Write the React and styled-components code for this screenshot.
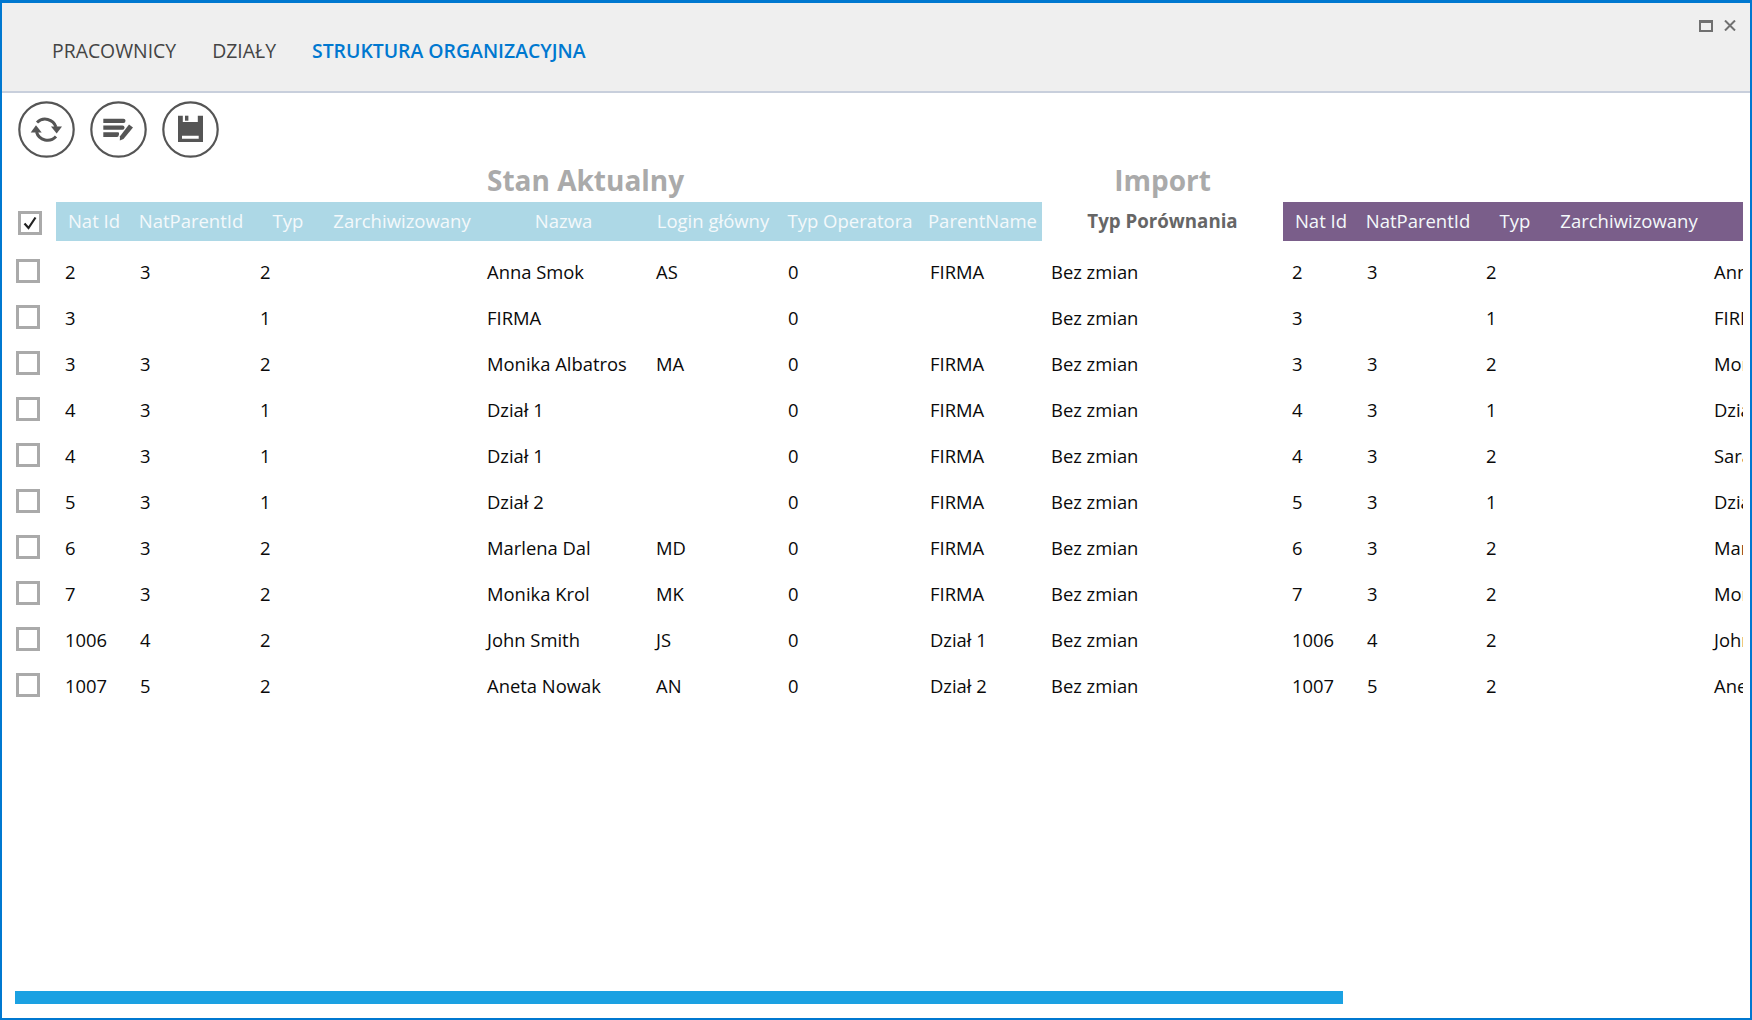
import React from 'react'
import styled, { createGlobalStyle } from 'styled-components'

const COLUMNS = '40px 76px 118px 76px 152px 171px 128px 146px 119px 241px 76px 118px 76px 152px 38px'
const FONT = '"Open Sans", "Liberation Sans", sans-serif'

const GlobalStyle = createGlobalStyle`
    html, body {
        margin: 0;
        padding: 0;
        background: #fff;
        overflow: hidden;
    }
`

const leftHeaders = ['Nat Id', 'NatParentId', 'Typ', 'Zarchiwizowany', 'Nazwa', 'Login główny', 'Typ Operatora', 'ParentName']
const rightHeaders = ['Nat Id', 'NatParentId', 'Typ', 'Zarchiwizowany', '']

// left padding of the text, one per data column
const pads = [9, 8, 10, 9, 9, 7, 11, 7, 9, 9, 8, 9, 9, 9]

const rows = [
    ['2', '3', '2', '', 'Anna Smok', 'AS', '0', 'FIRMA', 'Bez zmian', '2', '3', '2', '', 'Anna Smok'],
    ['3', '', '1', '', 'FIRMA', '', '0', '', 'Bez zmian', '3', '', '1', '', 'FIRMA'],
    ['3', '3', '2', '', 'Monika Albatros', 'MA', '0', 'FIRMA', 'Bez zmian', '3', '3', '2', '', 'Monika Albatros'],
    ['4', '3', '1', '', 'Dział 1', '', '0', 'FIRMA', 'Bez zmian', '4', '3', '1', '', 'Dział 1'],
    ['4', '3', '1', '', 'Dział 1', '', '0', 'FIRMA', 'Bez zmian', '4', '3', '2', '', 'Sara Nowak'],
    ['5', '3', '1', '', 'Dział 2', '', '0', 'FIRMA', 'Bez zmian', '5', '3', '1', '', 'Dział 2'],
    ['6', '3', '2', '', 'Marlena Dal', 'MD', '0', 'FIRMA', 'Bez zmian', '6', '3', '2', '', 'Marlena Dal'],
    ['7', '3', '2', '', 'Monika Krol', 'MK', '0', 'FIRMA', 'Bez zmian', '7', '3', '2', '', 'Monika Krol'],
    ['1006', '4', '2', '', 'John Smith', 'JS', '0', 'Dział 1', 'Bez zmian', '1006', '4', '2', '', 'John Smith'],
    ['1007', '5', '2', '', 'Aneta Nowak', 'AN', '0', 'Dział 2', 'Bez zmian', '1007', '5', '2', '', 'Aneta Nowak'],
]

function RefreshIcon() {
    return (
        <IconSvg viewBox="0 0 57 57">
            <circle cx="28.5" cy="28.5" r="27.2" fill="none" stroke="#555" strokeWidth="2.2" />
            <path d="M19 21.5 A11.5 11.5 0 0 1 38 26" fill="none" stroke="#555" strokeWidth="3" />
            <path d="M38.7 32.5 L33 25.5 L44 25.5 Z" fill="#555" />
            <path d="M38 35.5 A11.5 11.5 0 0 1 18.5 31" fill="none" stroke="#555" strokeWidth="3" />
            <path d="M18 24.3 L12.7 31.5 L23.7 31.5 Z" fill="#555" />
        </IconSvg>
    )
}

function EditListIcon() {
    return (
        <IconSvg viewBox="0 0 57 57">
            <circle cx="28.5" cy="28.5" r="27.2" fill="none" stroke="#555" strokeWidth="2.2" />
            <path d="M13.3 17.7 H33.5 Q35.5 17.7 35.5 19.8 Q35.5 22 33.5 22 H13.3 Z" fill="#555" />
            <path d="M13.3 24.4 H32.5 Q34.5 24.4 34.5 26.5 Q34.5 28.7 32.5 28.7 H13.3 Z" fill="#555" />
            <path d="M13.3 31.3 H28 Q29.5 31.3 29 33.5 Q28.5 36 27 36 H13.3 Z" fill="#555" />
            <path d="M39 23.5 L43 26.5 L33.5 38 L29.8 39.5 L30 35.3 Z" fill="#555" />
        </IconSvg>
    )
}

function SaveIcon() {
    return (
        <IconSvg viewBox="0 0 57 57">
            <circle cx="28.5" cy="28.5" r="27.2" fill="none" stroke="#555" strokeWidth="2.2" />
            <path
                fillRule="evenodd"
                d="M16 14.7 H20.8 V21 H35.8 V14.7 H41 V41 H16 Z M20 34.7 V37.8 H36.7 V34.7 Z"
                fill="#555"
            />
            <rect x="23" y="14.7" width="3.4" height="5" fill="#555" />
        </IconSvg>
    )
}

function CheckBox({ checked }) {
    return (
        <Box $checked={checked}>
            {checked && (
                <svg width="18" height="18" viewBox="0 0 18 18">
                    <path d="M3.5 9.5 L7.5 14 L14.5 3.5" fill="none" stroke="#222" strokeWidth="2.2" />
                </svg>
            )}
        </Box>
    )
}

function App() {
    return (
        <Window>
            <GlobalStyle />
            <TabBar>
                <Tabs>
                    <Tab>PRACOWNICY</Tab>
                    <Tab>DZIAŁY</Tab>
                    <Tab $active>STRUKTURA ORGANIZACYJNA</Tab>
                </Tabs>
                <WindowControls>
                    <MaximizeGlyph />
                    <svg width="12" height="11" viewBox="0 0 12 11">
                        <path d="M1 0.5 L11 10.5 M11 0.5 L1 10.5" stroke="#707070" strokeWidth="2" />
                    </svg>
                </WindowControls>
            </TabBar>

            <Toolbar>
                <RoundButton><RefreshIcon /></RoundButton>
                <RoundButton><EditListIcon /></RoundButton>
                <RoundButton><SaveIcon /></RoundButton>
            </Toolbar>

            <Table>
                <TitleRow>
                    <CurrentTitle>Stan Aktualny</CurrentTitle>
                    <ImportTitle>Import</ImportTitle>
                </TitleRow>
                <HeaderRow>
                    <SelectAll><CheckBox checked /></SelectAll>
                    {leftHeaders.map((h) => <HeaderCell key={h} $tone="#add8e6">{h}</HeaderCell>)}
                    <CompareHeader>Typ Porównania</CompareHeader>
                    {rightHeaders.map((h, i) => <HeaderCell key={i} $tone="#7a5e8a">{h}</HeaderCell>)}
                </HeaderRow>
                <Rows>
                    {rows.map((row, r) => (
                        <Row key={r}>
                            <CheckBox />
                            {row.map((value, c) => <Cell key={c} $pad={pads[c]}>{value}</Cell>)}
                        </Row>
                    ))}
                </Rows>
            </Table>

            <ScrollThumb />
        </Window>
    )
}

const Window = styled.div`
    box-sizing: border-box;
    width: 1752px;
    height: 1020px;
    display: flex;
    flex-direction: column;
    border: 2px solid #0078d0;
    border-top-width: 3px;
    background: #fff;
    font-family: ${FONT};
    overflow: hidden;
`

const TabBar = styled.div`
    box-sizing: border-box;
    height: 90px;
    display: flex;
    justify-content: space-between;
    background: #efefef;
    border-bottom: 2px solid #c8cfdc;
`

const Tabs = styled.div`
    display: flex;
    align-items: center;
    gap: 36px;
    padding: 6px 0 0 50px;
`

const Tab = styled.div`
    font-size: 19.4px;
    font-weight: ${(p) => (p.$active ? 600 : 400)};
    color: ${(p) => (p.$active ? '#0078d0' : '#444')};
`

const WindowControls = styled.div`
    display: flex;
    align-items: flex-start;
    gap: 11px;
    padding: 17px 14px 0 0;
`

const MaximizeGlyph = styled.div`
    box-sizing: border-box;
    width: 14px;
    height: 12px;
    border: 2px solid #707070;
    border-top-width: 3px;
`

const Toolbar = styled.div`
    display: flex;
    gap: 15px;
    padding: 8px 0 0 16px;
`

const RoundButton = styled.div`
    width: 57px;
    height: 57px;
`

const IconSvg = styled.svg`
    display: block;
    width: 57px;
    height: 57px;
`

const Table = styled.div`
    flex: 1;
    display: flex;
    flex-direction: column;
    padding-left: 14px;
`

const TitleRow = styled.div`
    height: 44px;
    display: grid;
    grid-template-columns: ${COLUMNS};
    align-items: end;
`

const CurrentTitle = styled.div`
    grid-column: 6 / 10;
    padding: 0 0 2px 9px;
    font-size: 28px;
    font-weight: 700;
    line-height: 40px;
    color: #aaa;
`

const ImportTitle = styled.div`
    grid-column: 10;
    padding-bottom: 2px;
    text-align: center;
    font-size: 28px;
    font-weight: 700;
    line-height: 40px;
    color: #aaa;
`

const HeaderRow = styled.div`
    height: 39px;
    display: grid;
    grid-template-columns: ${COLUMNS};
`

const SelectAll = styled.div`
    display: flex;
    align-items: center;
    padding: 3px 0 0 2px;
`

const HeaderCell = styled.div`
    display: flex;
    align-items: center;
    justify-content: center;
    padding-bottom: 2px;
    font-size: 18.5px;
    color: #f4f9fb;
    white-space: nowrap;
    background: ${(p) => p.$tone};
`

const CompareHeader = styled.div`
    display: flex;
    align-items: center;
    justify-content: center;
    padding-bottom: 2px;
    font-size: 18.7px;
    font-weight: 700;
    color: #666;
`

const Rows = styled.div`
    padding-top: 7px;
`

const Row = styled.div`
    height: 46px;
    display: grid;
    grid-template-columns: ${COLUMNS};
    align-items: center;
`

const Cell = styled.div`
    padding: 1px 0 0 ${(p) => p.$pad}px;
    font-size: 18.4px;
    color: #0a0a0a;
    white-space: nowrap;
    overflow: hidden;
`

const Box = styled.div`
    box-sizing: border-box;
    width: 24px;
    height: 24px;
    display: flex;
    align-items: center;
    justify-content: center;
    border: 3px solid #aaa;
    background: #fff;
`

const ScrollThumb = styled.div`
    flex: none;
    width: 1328px;
    height: 13px;
    margin: 0 0 14px 13px;
    background: #1ba1e2;
`

export default App
